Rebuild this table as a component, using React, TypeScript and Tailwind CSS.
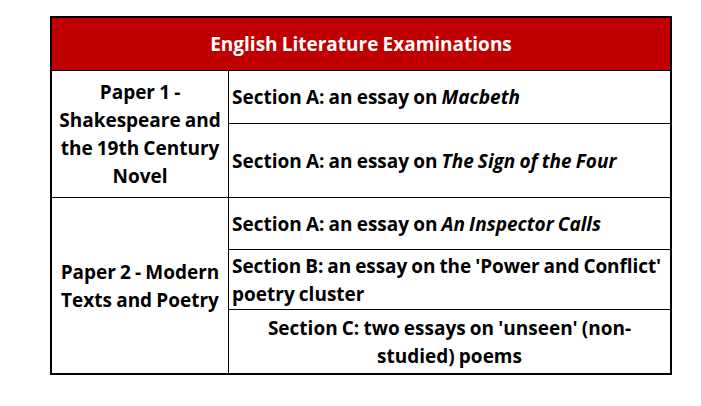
import React from "react";

export default function App() {
  const font = { fontFamily: '"Open Sans", "Noto Sans", sans-serif' };
  return (
    <div className="w-[701px] h-[406px] bg-white pt-[16px] pl-[50px]" style={font}>
      <div className="w-[622px] border-2 border-black font-bold text-[19px] leading-[28px] text-black [word-spacing:-0.8px]">
        <div className="h-[53px] bg-[#c00000] border-b border-black flex items-center justify-center text-white">
          English Literature Examinations
        </div>
        <div className="flex border-b border-black">
          <div className="w-[177px] shrink-0 border-r border-black flex items-center justify-center text-center px-[2px]">
            Paper 1 - Shakespeare and the 19th Century Novel
          </div>
          <div className="flex-1 flex flex-col">
            <div className="h-[53px] border-b border-black flex items-center px-[3px]">
              <span>
                Section A: an essay on <i>Macbeth</i>
              </span>
            </div>
            <div className="h-[73px] flex items-center px-[3px]">
              <span>
                Section A: an essay on <i>The Sign of the Four</i>
              </span>
            </div>
          </div>
        </div>
        <div className="flex">
          <div className="w-[177px] shrink-0 border-r border-black flex items-center justify-center text-center px-[2px]">
            Paper 2 - Modern Texts and Poetry
          </div>
          <div className="flex-1 flex flex-col">
            <div className="h-[52px] border-b border-black flex items-center px-[3px]">
              <span>
                Section A: an essay on <i>An Inspector Calls</i>
              </span>
            </div>
            <div className="h-[60px] border-b border-black flex items-center pl-[3px] pr-0">
              <span>
                <span className="whitespace-nowrap tracking-[-0.08px]">Section B: an essay on the 'Power and Conflict'</span>
                <br />
                poetry cluster
              </span>
            </div>
            <div className="h-[63px] flex items-center justify-center text-center px-[3px]">
              <span>Section C: two essays on 'unseen' (non-studied) poems</span>
            </div>
          </div>
        </div>
      </div>
    </div>
  );
}
